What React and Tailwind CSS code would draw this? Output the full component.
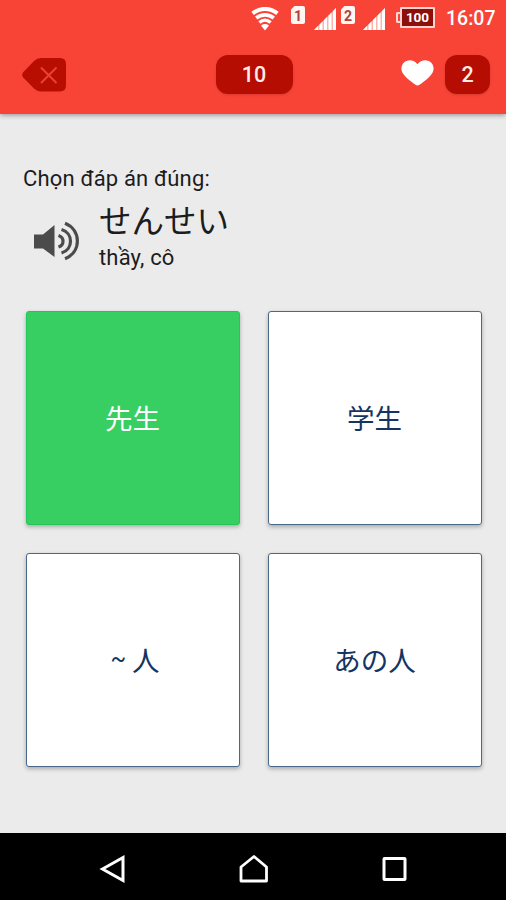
const options = [
  { id: 1, label: "先生", correct: true },
  { id: 2, label: "学生" },
  { id: 3, prefix: "~", label: "人" },
  { id: 4, label: "あの人" },
];

function WifiIcon() {
  return (
    <svg className="h-[24px] w-[28px]" viewBox="0 0 28 24" fill="none" stroke="#fff">
      <path d="M1.600 6.400C9 .4 19 .4 26.400 6.400" strokeWidth="4" />
      <path d="M5.200 11C10.300 6.800 17.700 6.800 22.800 11" strokeWidth="3.600" />
      <path d="M8.400 15.400C11.700 12.400 16.300 12.400 19.600 15.400" strokeWidth="3.400" />
      <path d="M10 18.400Q14 15.800 18 18.400L14 23.500Z" fill="#fff" stroke="none" />
    </svg>
  );
}

function SimBadge({ slot }) {
  return (
    <div className="flex h-[18px] w-[14px] items-center justify-center rounded-[2px] bg-[#fff5f3] pt-[1px] text-[14px] leading-none font-bold text-[#a8453c] [clip-path:polygon(25%_0,100%_0,100%_100%,0_100%,0_20%)]">
      {slot}
    </div>
  );
}

function SignalIcon() {
  return (
    <svg className="h-[22px] w-[22px]" viewBox="0 0 22 22">
      <path d="M0 22L22 0V22Z" fill="#fbb4ad" />
      <path d="M0 22L4 18V22ZM5.5 16.500L8.500 13.500V22H5.500ZM10 12L13 9V22H10ZM14.500 7.500L17.500 4.500V22H14.500ZM19 3L22 0V22H19Z" fill="#fff" />
    </svg>
  );
}

function Battery() {
  return (
    <div className="flex items-center">
      <div className="h-[11px] w-[4px] rounded-l-[2px] border-2 border-r-0 border-[#ffd9d5]" />
      <div className="flex h-[21px] w-[35px] items-center justify-center rounded-[1px] border-2 border-[#ffd3cf] bg-[#8c1009] text-[13.5px] leading-none font-bold text-white">
        100
      </div>
    </div>
  );
}

function StatusBar() {
  return (
    <div className="flex h-[38px] items-start pl-[251px] text-white">
      <div className="pt-[7px]">
        <WifiIcon />
      </div>
      <div className="ml-[12px] pt-[6px]">
        <SimBadge slot="1" />
      </div>
      <div className="ml-[9px] pt-[8px]">
        <SignalIcon />
      </div>
      <div className="ml-[5px] pt-[6px]">
        <SimBadge slot="2" />
      </div>
      <div className="ml-[8px] pt-[8px]">
        <SignalIcon />
      </div>
      <div className="ml-[11px] pt-[7px]">
        <Battery />
      </div>
      <div className="ml-[11px] pt-[7px] text-[19.5px] leading-[24px] font-medium">16:07</div>
    </div>
  );
}

function Toolbar() {
  return (
    <div className="flex h-[76px] items-start justify-between pr-[16px] pl-[22px]">
      <div className="w-[194px] pt-[20px]">
        <svg className="h-[34px] w-[44px]" viewBox="0 0 44 34">
          <path d="M1.200 14.200L12 3Q15 0 19 0H38Q44 0 44 6V27Q44 33.500 38 33.500H19Q15 33.500 12 30.500L1.200 19.500Q-.8 17 1.200 14.200Z" fill="#b80e02" />
          <path d="M19 9.500L34.500 25M34.500 9.500L19 25" stroke="#e94135" strokeWidth="2" fill="none" />
        </svg>
      </div>
      <div className="mt-[17px] flex h-[39px] w-[77px] items-center justify-center rounded-[12px] bg-[#b50d01] pt-[2px] pr-[1px] text-[21.5px] font-medium text-[#ffeae8] shadow-sm">
        10
      </div>
      <div className="flex w-[197px] justify-end">
        <svg className="mt-[22px] mr-[11px] h-[26px] w-[33px]" viewBox="0 0 33 26">
          <path d="M16.500 4.200C20-.8 27-1 30.500 3C33.800 7 33 12 29.500 15.500C26 19.500 21 23 18.500 24.800Q16.500 26 14.500 24.800C12 23 7 19.500 3.500 15.500C0 12-.8 7 2.500 3C6-1 13-.8 16.500 4.200Z" fill="#fff" />
        </svg>
        <div className="mt-[17px] flex h-[39px] w-[45px] items-center justify-center rounded-[12px] bg-[#b50d01] pt-[2px] text-[21.5px] font-medium text-[#ffeae8] shadow-sm">
          2
        </div>
      </div>
    </div>
  );
}

function SpeakerIcon() {
  return (
    <svg className="h-[40px] w-[46px]" viewBox="0 0 46 40" fill="none" stroke="#4b4b4b">
      <path d="M0 13.500H9L20.500 4V36L9 27.500H0Z" fill="#4b4b4b" stroke="none" />
      <path d="M24.500 14.500Q29 16 29 20.200Q29 24.500 24.500 26" strokeWidth="3.200" />
      <path d="M27.500 8.500C39.500 12 39.500 28.500 27.500 32" strokeWidth="3.200" />
      <path d="M31 2.200C47.500 9 47.500 31 31 37.800" strokeWidth="3.200" />
    </svg>
  );
}

function Question() {
  return (
    <div className="h-[197px] pt-[50px] pl-[23px] text-[#1c1c1c]">
      <div className="text-[22px] leading-[30px] tracking-[0.16px]">Chọn đáp án đúng:</div>
      <div className="mt-[6px] flex pl-[11px]">
        <div className="w-[65px] pt-[21px]">
          <SpeakerIcon />
        </div>
        <div>
          <div className="pt-[1px] text-[32.5px] leading-[43px]">せんせい</div>
          <div className="text-[22px] leading-[28px] tracking-[0.16px]">thầy, cô</div>
        </div>
      </div>
    </div>
  );
}

function OptionCard({ option }) {
  return (
    <div
      className={`flex h-[214px] items-center justify-center rounded-[3px] border pt-[3px] pr-[1px] text-[27.5px] shadow-[0_2px_4px_rgba(0,0,0,0.28)] ${
        option.correct ? "border-[#22c759] bg-[#37ce62] text-white" : "border-[#48688a] bg-white text-[#143461]"
      }`}
    >
      {option.prefix && <span className="mr-[6px] ml-[5px] pb-[3px] text-[23px]">{option.prefix}</span>}
      {option.label}
    </div>
  );
}

function NavBar() {
  return (
    <div className="flex h-[67px] items-center justify-between bg-black px-[98px] pt-[5px]">
      <svg className="h-[30px] w-[30px]" viewBox="0 0 30 30" fill="none" stroke="#fff" strokeWidth="3">
        <path d="M4.500 15L25 3.500V26.500Z" />
      </svg>
      <svg className="h-[30px] w-[30px]" viewBox="0 0 30 30" fill="none" stroke="#fff" strokeWidth="2.800">
        <path d="M3 27V13L16 2.500L28.500 13V27Z" strokeLinejoin="round" />
      </svg>
      <svg className="h-[30px] w-[30px]" viewBox="0 0 30 30" fill="none" stroke="#fff" strokeWidth="3">
        <rect x="6" y="4.500" width="21" height="21" rx="0.500" />
      </svg>
    </div>
  );
}

export default function App() {
  return (
    <div className="flex h-[900px] w-[506px] flex-col overflow-hidden bg-[#ebebeb] font-['Roboto','Noto_Sans_CJK_JP',sans-serif]">
      <header className="relative bg-[#f74437] shadow-[0_1px_5px_rgba(0,0,0,0.4)]">
        <StatusBar />
        <Toolbar />
      </header>
      <main className="flex-1">
        <Question />
        <div className="grid grid-cols-[214px_214px] gap-[28px] pl-[26px]">
          {options.map((o) => (
            <OptionCard key={o.id} option={o} />
          ))}
        </div>
      </main>
      <NavBar />
    </div>
  );
}
